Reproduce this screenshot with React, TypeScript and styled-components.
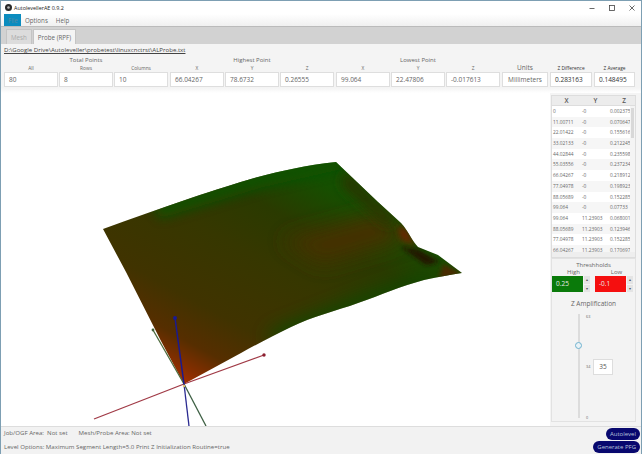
import React from "react";
import styled, { createGlobalStyle } from "styled-components";

const Global = createGlobalStyle`
  html, body { margin: 0; padding: 0; width: 642px; height: 454px; overflow: hidden; background: #fff; }
  #root { width: 642px; height: 454px; }
  * { box-sizing: border-box; }
`;

const Window = styled.div`
  width: 642px; height: 454px; display: flex; flex-direction: column;
  border: 1px solid #7d9fb3; border-bottom: none; background: #fff; overflow: hidden;
  font-family: "Open Sans", "Liberation Sans", sans-serif; color: #555;
`;
const TitleBar = styled.div`
  height: 13px; flex: none; display: flex; align-items: center; padding: 0 6px 0 4px; gap: 2px;
  font-size: 5.4px; color: #222; background: #fff;
`;
const AppTitle = styled.span` flex: 1; `;
const WinButtons = styled.div` display: flex; align-items: center; gap: 14px; color: #444; `;
const MenuBar = styled.div`
  height: 13px; flex: none; display: flex; align-items: stretch; font-size: 6.2px; color: #666;
  background: linear-gradient(#fff, #f0f0f0); border-bottom: 1px solid #bbb;
`;
const MenuItem = styled.div<{ $active?: boolean }>`
  display: flex; align-items: center; padding: 0 4px;
  margin-left: ${p => (p.$active ? "3px" : "0")}; width: ${p => (p.$active ? "17px" : "auto")};
  background: ${p => (p.$active ? "#0b8cbf" : "transparent")};
  color: ${p => (p.$active ? "#5a8aa0" : "#666")};
`;
const TabBar = styled.div`
  height: 17px; flex: none; display: flex; align-items: flex-end; gap: 1px; padding-left: 5px; background: #d2d2d2;
`;
const Tab = styled.div<{ $active?: boolean }>`
  height: 15px; display: flex; align-items: center; padding: 0 4px;
  font-size: 6.2px; background: ${p => (p.$active ? "#f4f4f4" : "#dcdcdc")};
  color: ${p => (p.$active ? "#666" : "#aaa")}; border: 1px solid #c4c4c4; border-bottom: none;
  border-radius: 1px 1px 0 0;
`;
const Header = styled.div`
  height: 49px; flex: none; padding: 1px 3px 0 3px; display: flex; flex-direction: column;
  background: linear-gradient(#f4f4f4 44px, #fff);
`;
const FilePath = styled.div`
  height: 10px; line-height: 10px; font-size: 6.1px; color: #444; text-decoration: underline; white-space: nowrap;
`;
const Stats = styled.div` display: flex; align-items: flex-end; gap: 2px; margin-top: 1px; `;
const Group = styled.div` display: flex; flex-direction: column; align-items: stretch; `;
const GroupTitle = styled.div` height: 8px; line-height: 8px; text-align: center; font-size: 6px; color: #666; `;
const Columns = styled.div` display: flex; gap: 1px; `;
const Column = styled.div<{ $w: number }>` width: ${p => p.$w}px; display: flex; flex-direction: column; `;
const SubLabel = styled.div<{ $big?: boolean; $dark?: boolean }>`
  height: 8px; line-height: 8px; text-align: center; white-space: nowrap;
  font-size: ${p => (p.$big ? "6.5px" : "4.8px")}; color: ${p => (p.$dark ? "#333" : "#666")};
`;
const Field = styled.div<{ $center?: boolean; $dark?: boolean }>`
  height: 15px; line-height: 13px; background: #fff; border: 1px solid #dedede; padding: 0 ${p => (p.$center ? "0" : "4px")};
  font-size: 6.5px; text-align: ${p => (p.$center ? "center" : "left")}; color: ${p => (p.$dark ? "#333" : "#666")};
  white-space: nowrap; overflow: hidden;
`;
const Main = styled.div` flex: 1; min-height: 0; display: flex; `;
const Canvas = styled.div` width: 549px; flex: none; background: #fff; `;
const Scene = styled.svg` display: block; width: 549px; height: 333px; `;
const Side = styled.div`
  flex: 1; background: #f4f4f4; padding: 2px 5px 4px 1px; display: flex; flex-direction: column; min-width: 0;
`;
const TableBox = styled.div`
  height: 163px; flex: none; position: relative; background: #fff; border: 1px solid #ddd; overflow: hidden;
`;
const TableHead = styled.div`
  height: 10px; display: grid; grid-template-columns: 29px 29px 28px; background: #ececec; border-bottom: 1px solid #ddd;
  font-size: 6.5px; font-weight: 600; color: #555; text-align: center; line-height: 9px;
`;
const TableRow = styled.div<{ $odd?: boolean }>`
  height: 10.7px; display: grid; grid-template-columns: 29px 28px 29px; line-height: 10.7px; font-size: 4.8px; color: #666;
  padding-left: 1px; background: ${p => (p.$odd ? "#f6f6f6" : "#fff")}; white-space: nowrap; overflow: hidden;
`;
const VScroll = styled.div`
  position: absolute; right: 0; top: 10px; bottom: 5px; width: 5px; background: #f4f4f4;
  &::after { content: ""; position: absolute; left: 1px; right: 1px; top: 2px; height: 30px; background: #d8d8d8; }
`;
const HScroll = styled.div`
  position: absolute; left: 0; right: 0; bottom: 0; height: 5px; background: #eee;
`;
const Panel = styled.div`
  flex: 1; min-height: 0; border: 1px solid #e2e2e2; background: #f3f3f3; display: flex; flex-direction: column;
  align-items: center; padding-top: 2px;
`;
const PanelTitle = styled.div` font-size: 6px; line-height: 8px; color: #666; height: 8px; `;
const ThreshRow = styled.div` display: flex; width: 85px; gap: 5px; padding-left: 1px; `;
const ThreshCol = styled.div` width: 38px; display: flex; flex-direction: column; `;
const ThreshLabel = styled.div` font-size: 6px; line-height: 7px; height: 7px; text-align: center; color: #666; padding-left: 5px; `;
const Spin = styled.div` display: flex; height: 16px; gap: 1px; `;
const SpinValue = styled.div<{ $bg: string }>`
  flex: 1; background: ${p => p.$bg}; color: #e8e8e8; font-size: 6.5px; line-height: 16px; padding-left: 4px;
`;
const SpinArrows = styled.div`
  width: 6px; display: flex; flex-direction: column; gap: 1px; font-size: 4px; color: #555; text-align: center; line-height: 7px;
`;
const SpinArrow = styled.div` flex: 1; background: #e4e4e4; `;
const AmpTitle = styled.div` margin-top: 7px; font-size: 6.5px; line-height: 9px; color: #666; `;
const SliderArea = styled.div` margin-top: 2px; flex: 1; width: 85px; display: flex; padding-left: 27px; `;
const Track = styled.div`
  width: 2px; height: 104px; position: relative; margin-top: 4px; background: #dcdcdc; flex: none;
`;
const Thumb = styled.div`
  position: absolute; left: -3px; top: 28px; width: 7px; height: 7px; border-radius: 50%;
  background: #e9f2f6; border: 1.5px solid #6fb2cf;
`;
const Tick = styled.div<{ $top: number }>`
  position: absolute; left: 8px; top: ${p => p.$top}px; font-size: 3.8px; line-height: 5px; color: #666;
`;
const AmpValue = styled.div`
  margin: 49px 0 0 13px; width: 20px; height: 16px; background: #fff; border: 1px solid #ddd;
  font-size: 6.5px; line-height: 14px; text-align: center; color: #555;
`;
const Status = styled.div`
  height: 28px; flex: none; position: relative; background: #f2f2f2; border-top: 1px solid #ddd;
  font-size: 6.1px; color: #666; padding: 2px 3px; display: flex; flex-direction: column; gap: 7px;
`;
const StatusLine = styled.div` display: flex; gap: 11px; line-height: 7px; white-space: nowrap; `;
const Actions = styled.div`
  position: absolute; right: 1px; top: 1px; display: flex; flex-direction: column; align-items: flex-end; gap: 1px;
`;
const ActionButton = styled.div`
  height: 12px; padding: 0 4px; border-radius: 6px; background: #08086e; color: #b9c4dc; font-size: 6px; line-height: 12px;
`;

const rows = [
  ["0", "-0", "0.002375"], ["11.00711", "-0", "0.070647"], ["22.01422", "-0", "0.155616"],
  ["33.02133", "-0", "0.212245"], ["44.02844", "-0", "0.235598"], ["55.03556", "-0", "0.237234"],
  ["66.04267", "-0", "0.218912"], ["77.04978", "-0", "0.198923"], ["88.05689", "-0", "0.152285"],
  ["99.064", "-0", "0.07733"], ["99.064", "11.23903", "0.068001"], ["88.05689", "11.23903", "0.123946"],
  ["77.04978", "11.23903", "0.152285"], ["66.04267", "11.23903", "0.170697"],
];

const surface =
  "M102 229 C130 219 160 208 190 198 C215 190 236 183 257 177 C280 171 305 165 335 162 L377 202 L400 223 C408 232 411 241 417 247 L437 255 L461 273 C448 275 436 277 423 280 C400 286 380 295 357 303 C335 311 312 316 290 327 C272 336 256 344 240 353 L183 384 L160 341 L125 272 Z";

export default function App() {
  return (
    <Window>
      <Global />
      <TitleBar>
        <svg width="7" height="7" viewBox="0 0 7 7"><circle cx="3.5" cy="3.5" r="3.5" fill="#2a2a2a" /><circle cx="3.5" cy="3.5" r="1.3" fill="#bbb" /></svg>
        <AppTitle>AutolevellerAE 0.9.2</AppTitle>
        <WinButtons>
          <svg width="6" height="6" viewBox="0 0 6 6"><path d="M0.5 3.5H5.5" stroke="#444" strokeWidth="0.8" /></svg>
          <svg width="6" height="6" viewBox="0 0 6 6"><rect x="0.5" y="0.5" width="5" height="5" fill="none" stroke="#444" strokeWidth="0.8" /></svg>
          <svg width="6" height="6" viewBox="0 0 6 6"><path d="M0.5 0.5L5.5 5.5M5.5 0.5L0.5 5.5" stroke="#444" strokeWidth="0.8" /></svg>
        </WinButtons>
      </TitleBar>
      <MenuBar>
        <MenuItem $active>File</MenuItem>
        <MenuItem>Options</MenuItem>
        <MenuItem>Help</MenuItem>
      </MenuBar>
      <TabBar>
        <Tab>Mesh</Tab>
        <Tab $active>Probe (RPF)</Tab>
      </TabBar>
      <Header>
        <FilePath>D:\Google Drive\Autoleveller\probetest\linuxcnctrst\ALProbe.txt</FilePath>
        <Stats>
          <Group>
            <GroupTitle>Total Points</GroupTitle>
            <Columns>
              <Column $w={54}><SubLabel>All</SubLabel><Field>80</Field></Column>
              <Column $w={54}><SubLabel>Rows</SubLabel><Field>8</Field></Column>
              <Column $w={54}><SubLabel>Columns</SubLabel><Field>10</Field></Column>
            </Columns>
          </Group>
          <Group>
            <GroupTitle>Highest Point</GroupTitle>
            <Columns>
              <Column $w={54}><SubLabel>X</SubLabel><Field>66.04267</Field></Column>
              <Column $w={54}><SubLabel>Y</SubLabel><Field>78.6732</Field></Column>
              <Column $w={54}><SubLabel>Z</SubLabel><Field>0.26555</Field></Column>
            </Columns>
          </Group>
          <Group>
            <GroupTitle>Lowest Point</GroupTitle>
            <Columns>
              <Column $w={54}><SubLabel>X</SubLabel><Field>99.064</Field></Column>
              <Column $w={54}><SubLabel>Y</SubLabel><Field>22.47806</Field></Column>
              <Column $w={54}><SubLabel>Z</SubLabel><Field>-0.017613</Field></Column>
            </Columns>
          </Group>
          <Group>
            <Column $w={46}><SubLabel $big>Units</SubLabel><Field $center>Millimeters</Field></Column>
          </Group>
          <Group>
            <Column $w={42}><SubLabel $dark>Z Difference</SubLabel><Field $dark>0.283163</Field></Column>
          </Group>
          <Group>
            <Column $w={41}><SubLabel $dark>Z Average</SubLabel><Field $dark>0.148495</Field></Column>
          </Group>
        </Stats>
      </Header>
      <Main>
        <Canvas>
          <Scene viewBox="0 93 549 333">
            <defs>
              <linearGradient id="base" gradientUnits="userSpaceOnUse" x1="183" y1="384" x2="300" y2="170">
                <stop offset="0" stopColor="#a83000" />
                <stop offset="0.06" stopColor="#852e00" />
                <stop offset="0.16" stopColor="#562e00" />
                <stop offset="0.32" stopColor="#403300" />
                <stop offset="0.6" stopColor="#363700" />
                <stop offset="0.8" stopColor="#2a3a00" />
                <stop offset="1" stopColor="#155000" />
              </linearGradient>
              <clipPath id="surf"><path d={surface} /></clipPath>
              <filter id="b10" x="-60%" y="-60%" width="220%" height="220%"><feGaussianBlur stdDeviation="10" /></filter>
              <filter id="b6" x="-60%" y="-60%" width="220%" height="220%"><feGaussianBlur stdDeviation="6" /></filter>
              <filter id="b3" x="-60%" y="-60%" width="220%" height="220%"><feGaussianBlur stdDeviation="3" /></filter>
              <filter id="b2" x="-60%" y="-60%" width="220%" height="220%"><feGaussianBlur stdDeviation="2" /></filter>
            </defs>
            <path d={surface} fill="url(#base)" />
            <g clipPath="url(#surf)">
              <path d="M150 205 L255 172 L340 158 L345 168 L262 187 L160 218 Z" fill="#0e5200" opacity="0.9" filter="url(#b6)" />
              <path d="M265 335 L360 298 L430 274 L434 284 L362 310 L280 345 Z" fill="#0a5000" filter="url(#b10)" />
              <path d="M280 240 L380 212 L405 240 L320 265 Z" fill="#443300" filter="url(#b10)" />
              <path d="M345 170 L395 222 L385 225 L340 185 Z" fill="#2a3400" filter="url(#b6)" />
              <path d="M396 226 L405 228 L415 246 L400 240 Z" fill="#6a2800" filter="url(#b3)" />
              <path d="M400 247 L418 250 L438 262 L425 265 Z" fill="#241400" filter="url(#b2)" />
              <path d="M442 264 L462 274 L438 279 Z" fill="#4a2c00" filter="url(#b2)" />
            </g>
            <g fill="none" strokeWidth="1.3">
              <path d="M183 384 L93 419" stroke="#a03a46" />
              <path d="M183 384 L263 355" stroke="#a03a46" />
              <path d="M183 384 L152 330" stroke="#4d6a3c" />
              <path d="M183 384 L205 426" stroke="#3e6044" />
              <path d="M183 384 L174 318" stroke="#1a1a90" strokeWidth="1.5" />
              <path d="M183 384 L188 426" stroke="#2a2a90" />
            </g>
            <circle cx="263" cy="355" r="1.7" fill="#8c1f30" />
            <circle cx="152" cy="330" r="1.4" fill="#40603a" />
            <circle cx="174" cy="318" r="2" fill="#1a1a90" />
            <circle cx="183" cy="386" r="1.2" fill="#e0c070" />
          </Scene>
        </Canvas>
        <Side>
          <TableBox>
            <TableHead><span>X</span><span>Y</span><span>Z</span></TableHead>
            {rows.map((r, i) => (
              <TableRow key={i} $odd={i % 2 === 1}>
                <span>{r[0]}</span><span>{r[1]}</span><span>{r[2]}</span>
              </TableRow>
            ))}
            <VScroll />
            <HScroll />
          </TableBox>
          <Panel>
            <PanelTitle>Threshholds</PanelTitle>
            <ThreshRow>
              <ThreshCol>
                <ThreshLabel>High</ThreshLabel>
                <Spin>
                  <SpinValue $bg="#0a7a0a">0.25</SpinValue>
                  <SpinArrows><SpinArrow>▴</SpinArrow><SpinArrow>▾</SpinArrow></SpinArrows>
                </Spin>
              </ThreshCol>
              <ThreshCol>
                <ThreshLabel>Low</ThreshLabel>
                <Spin>
                  <SpinValue $bg="#f50f0f">-0.1</SpinValue>
                  <SpinArrows><SpinArrow>▴</SpinArrow><SpinArrow>▾</SpinArrow></SpinArrows>
                </Spin>
              </ThreshCol>
            </ThreshRow>
            <AmpTitle>Z Amplification</AmpTitle>
            <SliderArea>
              <Track>
                <Thumb />
                <Tick $top={0}>63</Tick>
                <Tick $top={50}>34</Tick>
                <Tick $top={101}>0</Tick>
              </Track>
              <AmpValue>35</AmpValue>
            </SliderArea>
          </Panel>
        </Side>
      </Main>
      <Status>
        <StatusLine><span>Job/OGF Area:&nbsp; Not set</span><span>Mesh/Probe Area: Not set</span></StatusLine>
        <StatusLine><span>Level Options: Maximum Segment Length=5.0 Print Z Initialization Routine=true</span></StatusLine>
        <Actions>
          <ActionButton>Autolevel</ActionButton>
          <ActionButton>Generate PFG</ActionButton>
        </Actions>
      </Status>
    </Window>
  );
}
